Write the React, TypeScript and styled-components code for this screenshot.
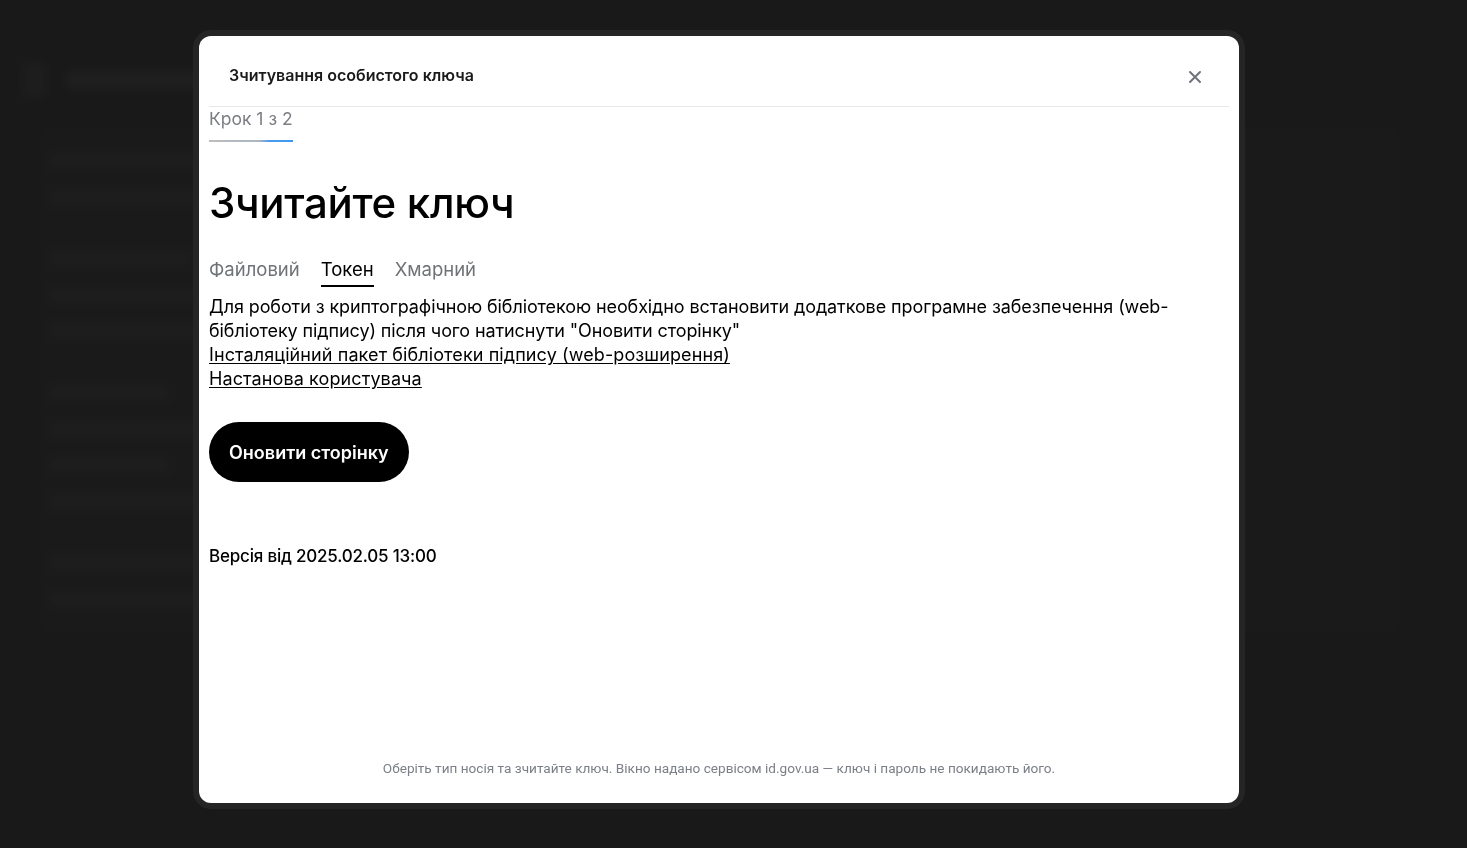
import React from 'react';
import { createGlobalStyle, styled } from 'styled-components';

const GlobalStyle = createGlobalStyle`
  html, body {
    margin: 0;
    padding: 0;
    height: 100%;
    background: #1d1d1d;
    font-family: Inter, 'Noto Sans', sans-serif;
  }
  #root {
    min-height: 100%;
  }
`;

const Backdrop = styled.div`
  min-height: 848px;
  padding: 62px 40px 0 22px;
  box-sizing: border-box;
  filter: blur(4px);
  opacity: 0.4;
  display: flex;
  flex-direction: column;
  gap: 28px;
`;

const GhostRow = styled.div`
  display: flex;
  align-items: center;
  gap: 20px;
`;

const GhostSquare = styled.div`
  width: 24px;
  height: 36px;
  border-radius: 6px;
  background: #2c2c2c;
`;

const GhostBar = styled.div<{ $w: number; $h?: number; $tone?: string }>`
  width: ${({ $w }) => $w}px;
  height: ${({ $h }) => $h ?? 14}px;
  border-radius: 6px;
  background: ${({ $tone }) => $tone ?? '#2e2e2e'};
`;

const GhostCard = styled.div`
  margin-left: 18px;
  width: 1340px;
  padding: 28px 10px;
  display: flex;
  flex-direction: column;
  gap: 22px;
  border-radius: 12px;
  background: #212121;
`;

const Overlay = styled.div`
  position: fixed;
  inset: 0;
  display: flex;
  align-items: flex-start;
  padding: 36px 0 0 199px;
  background: rgba(20, 20, 20, 0.35);
`;

const Modal = styled.div`
  width: 1040px;
  height: 767px;
  background: #fff;
  border-radius: 12px;
  box-shadow: 0 0 0 6px #252525;
  display: flex;
  flex-direction: column;
  overflow: hidden;
`;

const Header = styled.div`
  display: flex;
  align-items: center;
  justify-content: space-between;
  padding: 28px 35px 20px 30px;
`;

const Title = styled.h2`
  margin: 0;
  font-size: 16px;
  line-height: 22px;
  font-weight: 600;
  color: #1a1a1a;
`;

const CloseButton = styled.button`
  border: 0;
  background: none;
  padding: 0;
  width: 18px;
  height: 18px;
  display: flex;
  align-items: center;
  justify-content: center;
  margin-top: 4px;
  color: #6f737a;
  cursor: pointer;
`;

const Divider = styled.div`
  height: 1px;
  margin: 0 10px;
  background: #e8e8e8;
`;

const Body = styled.div`
  padding: 0 10px;
  display: flex;
  flex-direction: column;
  align-items: flex-start;
  color: #000;
`;

const Step = styled.div`
  font-size: 17.5px;
  line-height: 24px;
  color: #7b7e82;
  padding-bottom: 11px;
  position: relative;
  &::after {
    content: '';
    position: absolute;
    left: 0;
    right: 0;
    bottom: 0;
    height: 2px;
    background: linear-gradient(90deg, #bdbdbd 0%, #a9b6c2 60%, #4a9cf0 72%, #3d97f2 100%);
  }
`;

const Heading = styled.h1`
  margin: 36px 0 0;
  font-size: 42px;
  line-height: 50px;
  font-weight: 500;
  letter-spacing: -0.3px;
`;

const Tabs = styled.div`
  display: flex;
  gap: 21px;
  margin-top: 29px;
`;

const Tab = styled.button<{ $active?: boolean }>`
  border: 0;
  background: none;
  padding: 0 0 4px;
  font-family: inherit;
  font-size: 18.5px;
  line-height: 24px;
  color: ${({ $active }) => ($active ? '#000' : '#6f7276')};
  border-bottom: 2px solid ${({ $active }) => ($active ? '#000' : 'transparent')};
  cursor: pointer;
`;

const Text = styled.p`
  margin: 8px 0 0;
  font-size: 18px;
  line-height: 24px;
  letter-spacing: -0.1px;
`;

const Link = styled.a`
  display: block;
  color: #000;
  text-decoration: underline;
  text-underline-offset: 2px;
  letter-spacing: 0.1px;
`;

const RefreshButton = styled.button`
  margin-top: 31px;
  height: 60px;
  padding: 0 20px;
  border: 0;
  border-radius: 30px;
  background: #000;
  color: #fff;
  font-family: inherit;
  font-size: 18px;
  font-weight: 600;
  cursor: pointer;
`;

const Version = styled.div`
  margin-top: 62px;
  font-size: 17px;
  line-height: 24px;
  font-weight: 500;
  letter-spacing: -0.2px;
`;

const Footer = styled.div`
  margin-top: auto;
  padding-bottom: 26px;
  text-align: center;
  font-family: Roboto, 'Liberation Sans', sans-serif;
  font-size: 13.6px;
  line-height: 18px;
  color: #7b7f86;
`;

const CloseIcon = () => (
  <svg width="14" height="14" viewBox="0 0 14 14" fill="none">
    <path d="M2 2L12 12M12 2L2 12" stroke="currentColor" strokeWidth="2" strokeLinecap="round" />
  </svg>
);

const PageBehind = () => (
  <Backdrop>
    <GhostRow>
      <GhostSquare />
      <GhostBar $w={260} $h={18} $tone="#333" />
    </GhostRow>
    <GhostCard>
      {[200, 240, 0, 140, 300, 220, 0, 120, 160, 120, 180, 0, 240, 380].map((w, i) =>
        w ? <GhostBar key={i} $w={w} /> : <GhostBar key={i} $w={1} $h={4} $tone="transparent" />,
      )}
    </GhostCard>
  </Backdrop>
);

const App = () => {
  return (
    <>
      <GlobalStyle />
      <PageBehind />
      <Overlay>
        <Modal role="dialog" aria-label="Зчитування особистого ключа">
          <Header>
            <Title>Зчитування особистого ключа</Title>
            <CloseButton aria-label="Закрити">
              <CloseIcon />
            </CloseButton>
          </Header>
          <Divider />
          <Body>
            <Step>Крок 1 з 2</Step>
            <Heading>Зчитайте ключ</Heading>
            <Tabs>
              <Tab>Файловий</Tab>
              <Tab $active>Токен</Tab>
              <Tab>Хмарний</Tab>
            </Tabs>
            <Text>
              Для роботи з криптографічною бібліотекою необхідно встановити додаткове програмне забезпечення
              (web-бібліотеку підпису) після чого натиснути "Оновити сторінку"
              <Link href="#">Інсталяційний пакет бібліотеки підпису (web-розширення)</Link>
              <Link href="#">Настанова користувача</Link>
            </Text>
            <RefreshButton>Оновити сторінку</RefreshButton>
            <Version>Версія від 2025.02.05 13:00</Version>
          </Body>
          <Footer>
            Оберіть тип носія та зчитайте ключ. Вікно надано сервісом id.gov.ua — ключ і пароль не покидають його.
          </Footer>
        </Modal>
      </Overlay>
    </>
  );
};

export default App;
